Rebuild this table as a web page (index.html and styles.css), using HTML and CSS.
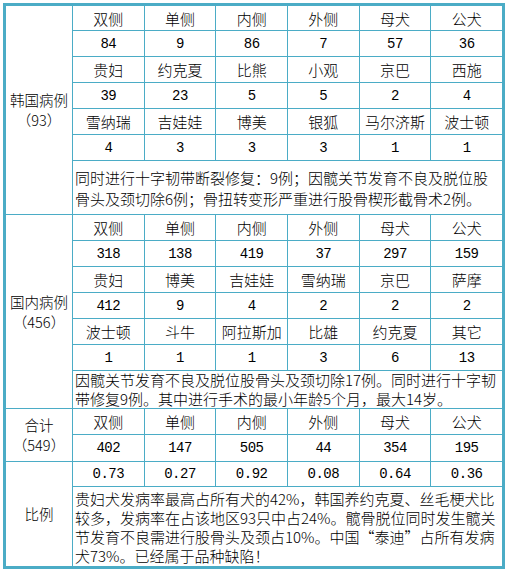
FILE: index.html
```html
<!DOCTYPE html>
<html lang="zh-CN">
<head>
<meta charset="utf-8">
<title>犬髋关节病例统计</title>
<link rel="stylesheet" href="styles.css">
</head>
<body>
<div class="sheet">
  <div class="label g-kr">韩国病例<br>（93）</div>
  <div class="c">双侧</div><div class="c">单侧</div><div class="c">内侧</div><div class="c">外侧</div><div class="c">母犬</div><div class="c">公犬</div>
  <div class="c n">84</div><div class="c n">9</div><div class="c n">86</div><div class="c n">7</div><div class="c n">57</div><div class="c n">36</div>
  <div class="c">贵妇</div><div class="c">约克夏</div><div class="c">比熊</div><div class="c">小观</div><div class="c">京巴</div><div class="c">西施</div>
  <div class="c n">39</div><div class="c n">23</div><div class="c n">5</div><div class="c n">5</div><div class="c n">2</div><div class="c n">4</div>
  <div class="c">雪纳瑞</div><div class="c">吉娃娃</div><div class="c">博美</div><div class="c">银狐</div><div class="c">马尔济斯</div><div class="c">波士顿</div>
  <div class="c n">4</div><div class="c n">3</div><div class="c n">3</div><div class="c n">3</div><div class="c n">1</div><div class="c n">1</div>
  <div class="note note-kr">同时进行十字韧带断裂修复：9例；因髋关节发育不良及脱位股<br>骨头及颈切除6例；骨扭转变形严重进行股骨楔形截骨术2例。</div>

  <div class="label g-cn">国内病例<br>（456）</div>
  <div class="c">双侧</div><div class="c">单侧</div><div class="c">内侧</div><div class="c">外侧</div><div class="c">母犬</div><div class="c">公犬</div>
  <div class="c n">318</div><div class="c n">138</div><div class="c n">419</div><div class="c n">37</div><div class="c n">297</div><div class="c n">159</div>
  <div class="c">贵妇</div><div class="c">博美</div><div class="c">吉娃娃</div><div class="c">雪纳瑞</div><div class="c">京巴</div><div class="c">萨摩</div>
  <div class="c n">412</div><div class="c n">9</div><div class="c n">4</div><div class="c n">2</div><div class="c n">2</div><div class="c n">2</div>
  <div class="c">波士顿</div><div class="c">斗牛</div><div class="c">阿拉斯加</div><div class="c">比雄</div><div class="c">约克夏</div><div class="c">其它</div>
  <div class="c n">1</div><div class="c n">1</div><div class="c n">1</div><div class="c n">3</div><div class="c n">6</div><div class="c n">13</div>
  <div class="note note-cn">因髋关节发育不良及脱位股骨头及颈切除17例。同时进行十字韧<br>带修复9例。其中进行手术的最小年龄5个月，最大14岁。</div>

  <div class="label g-total">合计<br>（549）</div>
  <div class="c">双侧</div><div class="c">单侧</div><div class="c">内侧</div><div class="c">外侧</div><div class="c">母犬</div><div class="c">公犬</div>
  <div class="c n">402</div><div class="c n">147</div><div class="c n">505</div><div class="c n">44</div><div class="c n">354</div><div class="c n">195</div>

  <div class="label g-ratio">比例</div>
  <div class="c n">0.73</div><div class="c n">0.27</div><div class="c n">0.92</div><div class="c n">0.08</div><div class="c n">0.64</div><div class="c n">0.36</div>
  <div class="note note-ratio">贵妇犬发病率最高占所有犬的42%，韩国养约克夏、丝毛梗犬比<br>较多，发病率在占该地区93只中占24%。髋骨脱位同时发生髋关<br>节发育不良需进行股骨头及颈占10%。中国“泰迪”占所有发病<br>犬73%。已经属于品种缺陷！</div>
</div>
</body>
</html>
```

FILE: styles.css
```css
html, body {
  margin: 0;
  padding: 0;
  background: #ffffff;
}

body {
  padding: 3px;
  font-family: "Noto Sans CJK SC", "Noto Sans", sans-serif;
  font-size: 15px;
  font-weight: 300;
  color: #000000;
}

.sheet {
  width: 496px;
  border: 3px solid #4bacc6;
  background: #4bacc6;
  display: grid;
  grid-template-columns: 66px repeat(6, 1fr);
  grid-template-rows: 24px 25px 25px 25px 25px 25px 53px 25px 25px 25px 25px 25px 25px 37px 25px 26px 24px 79px;
  gap: 1px;
}

.sheet > div {
  background: #ffffff;
}

.c {
  display: flex;
  align-items: center;
  justify-content: center;
  white-space: nowrap;
  line-height: 1;
}

.n {
  font-family: "Liberation Mono", "DejaVu Sans Mono", monospace;
  font-size: 14px;
  font-weight: 400;
  letter-spacing: -0.5px;
}

.label {
  grid-column: 1;
  display: flex;
  align-items: center;
  justify-content: center;
  text-align: center;
  line-height: 20px;
  font-size: 14.5px;
}

.g-kr { grid-row: 1 / span 7; }
.g-cn { grid-row: 8 / span 7; }
.g-total { grid-row: 15 / span 2; }
.g-ratio { grid-row: 17 / span 2; }

.note {
  grid-column: 2 / -1;
  display: flex;
  align-items: center;
  padding: 0 0 0 2px;
  white-space: nowrap;
}

.note-kr { line-height: 21px; }
.note-cn { line-height: 18.5px; }
.note-ratio { line-height: 19px; }
```
